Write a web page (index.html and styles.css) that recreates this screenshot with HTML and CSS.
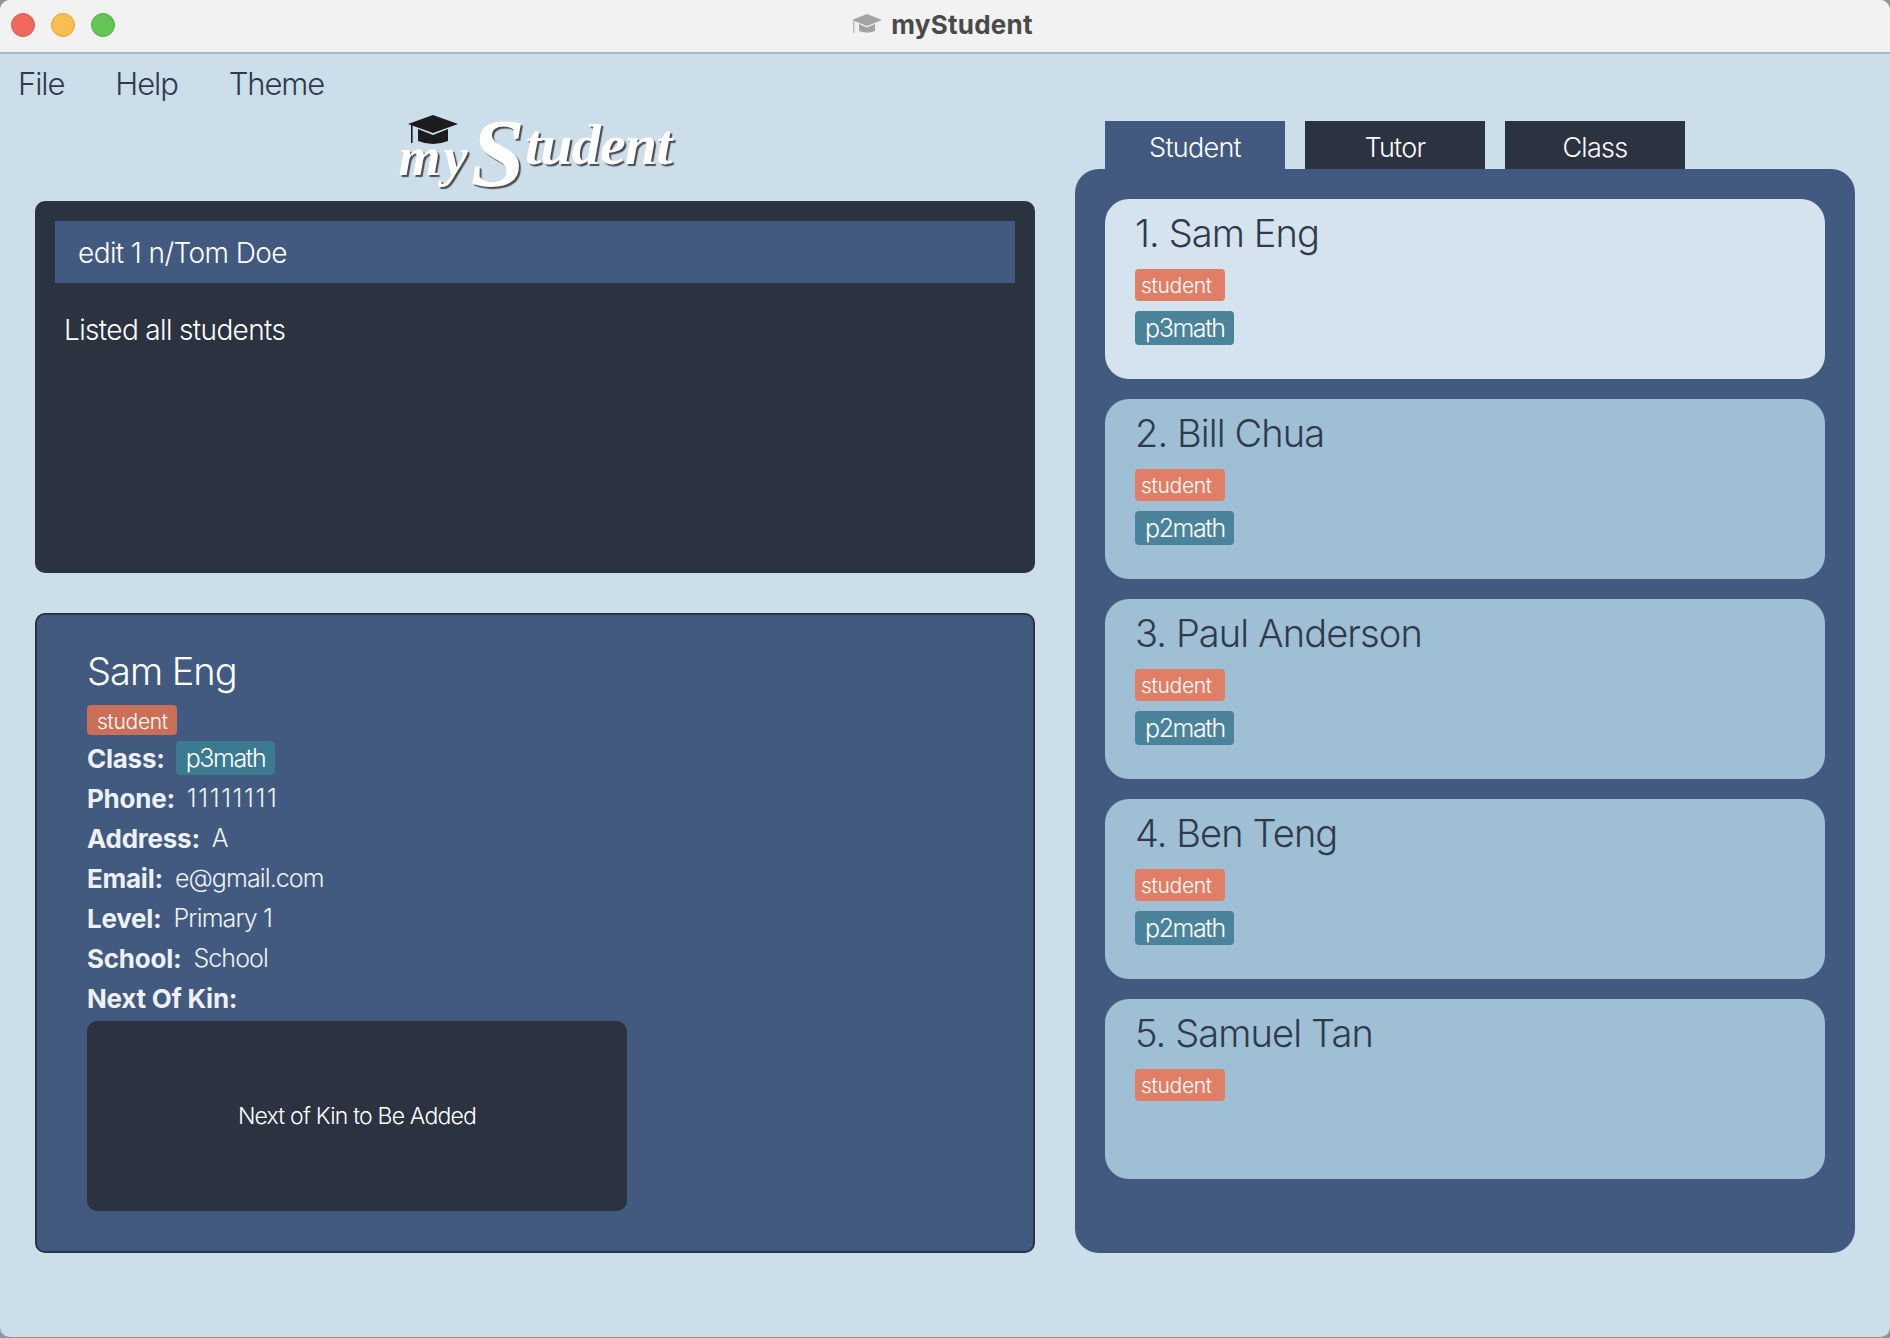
FILE: index.html
```html
<!DOCTYPE html>
<html>
<head>
<meta charset="UTF-8">
<title>myStudent</title>
<link rel="stylesheet" href="styles.css">
</head>
<body>
<div class="window">
    <header class="titlebar">
        <div class="dots">
            <span class="dot red"></span>
            <span class="dot yellow"></span>
            <span class="dot green"></span>
        </div>
        <div class="app-title">
            <svg class="title-icon" viewBox="0 0 30 20" width="30" height="20">
                <path d="M15 0 L30 6 L15 12 L0 6 Z" fill="#a3a3a3"/>
                <path d="M7 10 L15 13.5 L23 10 L23 17 Q15 20 7 17 Z" fill="#a3a3a3"/>
                <rect x="1" y="7" width="1.5" height="12" fill="#bdbdbd"/>
            </svg>
            <span>myStudent</span>
        </div>
    </header>

    <nav class="menubar">
        <a>File</a>
        <a>Help</a>
        <a>Theme</a>
    </nav>

    <main class="content">
        <section class="left">
            <div class="logo">
                <svg class="logo-hat" viewBox="0 0 50 30" width="50" height="30">
                    <path d="M25 0 L50 9 L25 18 L0 9 Z" fill="#1c1c1e"/>
                    <path d="M10 14 L25 20 L40 14 L40 26 Q25 32 10 26 Z" fill="#1c1c1e"/>
                    <rect x="3" y="10" width="1.6" height="18" fill="#1c1c1e"/>
                </svg>
                <span class="logo-my">my</span><span class="logo-cap">S</span><span class="logo-rest">tudent</span>
            </div>

            <div class="command-box">
                <div class="command-input">edit 1 n/Tom Doe</div>
                <div class="result">Listed all students</div>
            </div>

            <div class="detail">
                <h1>Sam Eng</h1>
                <span class="tag tag-role">student</span>
                <div class="row row-class"><b>Class:</b><span class="tag tag-class">p3math</span></div>
                <div class="row"><b>Phone:</b><span class="digits">11111111</span></div>
                <div class="row"><b>Address:</b><span>A</span></div>
                <div class="row"><b>Email:</b><span>e@gmail.com</span></div>
                <div class="row"><b>Level:</b><span>Primary 1</span></div>
                <div class="row"><b>School:</b><span>School</span></div>
                <div class="row"><b>Next Of Kin:</b></div>
                <div class="kin">Next of Kin to Be Added</div>
            </div>
        </section>

        <section class="right">
            <div class="tabs">
                <div class="tab active">Student</div>
                <div class="tab">Tutor</div>
                <div class="tab">Class</div>
            </div>
            <div class="panel">
                <div class="card selected">
                    <h2>1. Sam Eng</h2>
                    <span class="tag role">student</span>
                    <span class="tag cls">p3math</span>
                </div>
                <div class="card">
                    <h2>2. Bill Chua</h2>
                    <span class="tag role">student</span>
                    <span class="tag cls">p2math</span>
                </div>
                <div class="card">
                    <h2>3. Paul Anderson</h2>
                    <span class="tag role">student</span>
                    <span class="tag cls">p2math</span>
                </div>
                <div class="card">
                    <h2>4. Ben Teng</h2>
                    <span class="tag role">student</span>
                    <span class="tag cls">p2math</span>
                </div>
                <div class="card">
                    <h2>5. Samuel Tan</h2>
                    <span class="tag role">student</span>
                </div>
            </div>
        </section>
    </main>
</div>
</body>
</html>
```

FILE: styles.css
```css
* {
    margin: 0;
    padding: 0;
    box-sizing: border-box;
}

body {
    font-family: "Inter", "Liberation Sans", sans-serif;
    background: #8f9599;
    height: 1338px;
    overflow: hidden;
}

.window {
    height: 1338px;
    background: #cbdeea;
    border-radius: 10px;
    overflow: hidden;
    border-bottom: 1px solid #8f9599;
}

.titlebar {
    height: 54px;
    background: #f2f2f2;
    border-bottom: 2px solid #a9bac6;
    display: flex;
    align-items: center;
    justify-content: center;
    position: relative;
}

.dots {
    position: absolute;
    left: 11px;
    top: 13px;
    display: flex;
    gap: 16px;
}

.dot {
    width: 24px;
    height: 24px;
    border-radius: 50%;
}

.red { background: #f2675e; border: 1px solid #dd5a52; }
.yellow { background: #fabd50; border: 1px solid #e0a440; }
.green { background: #62c554; border: 1px solid #54ad48; }

.app-title {
    display: flex;
    align-items: center;
    gap: 9px;
    font-size: 26px;
    font-weight: 700;
    letter-spacing: 0.25px;
    color: #4a4a4a;
    margin: 0 5px 4px 0;
}

.menubar {
    height: 58px;
    padding-left: 18px;
    display: flex;
    align-items: center;
    gap: 51px;
    font-size: 31px;
    font-weight: 300;
    letter-spacing: -1.1px;
    color: #2f3a4c;
}

.content {
    display: flex;
    gap: 40px;
    padding: 2px 35px 0;
}

.left {
    width: 1000px;
}

.logo {
    height: 87px;
    position: relative;
    display: flex;
    justify-content: center;
    align-items: baseline;
    font-family: "Liberation Serif", serif;
    font-style: italic;
    font-weight: 700;
    color: #fff;
    text-shadow: 2px 2px 1px #4d4d4d;
}

.logo-hat {
    position: absolute;
    left: 373px;
    top: 1px;
}

.logo-my {
    font-size: 54px;
    line-height: 60px;
    letter-spacing: 3px;
    transform: translateY(8px);
}

.logo-cap {
    font-size: 98px;
    line-height: 40px;
    transform: translateY(19px);
}

.logo-rest {
    font-size: 58px;
    line-height: 60px;
    letter-spacing: -0.8px;
    transform: translateY(-3px);
}

.command-box {
    height: 372px;
    background: #2b3240;
    border-radius: 10px;
    padding: 20px;
    color: #fff;
}

.command-input {
    height: 62px;
    line-height: 64px;
    background: #425a7f;
    padding-left: 23px;
    font-size: 28px;
    font-weight: 300;
    letter-spacing: -0.6px;
}

.result {
    padding: 30px 0 0 9px;
    font-size: 28px;
    font-weight: 300;
    letter-spacing: -0.65px;
}

.detail {
    height: 640px;
    margin-top: 40px;
    background: #425a7f;
    border: 2px solid #2b3240;
    border-radius: 10px;
    padding: 30px 50px;
    color: #fff;
}

.detail h1 {
    font-size: 38px;
    font-weight: 300;
    letter-spacing: -1px;
    line-height: 52px;
    margin-bottom: 8px;
}

.tag {
    display: inline-block;
    border-radius: 4px;
    color: #fff;
    font-weight: 300;
}

.tag-role {
    background: #cc6f58;
    font-size: 21px;
    letter-spacing: -0.3px;
    height: 30px;
    line-height: 33px;
    padding: 0 10px;
    display: block;
    width: 90px;
}

.row {
    height: 40px;
    display: flex;
    align-items: center;
    gap: 12px;
    font-size: 25px;
    font-weight: 300;
    letter-spacing: -0.9px;
    color: #edf1f6;
}

.row b {
    font-size: 26px;
    font-weight: 700;
    letter-spacing: -0.25px;
}

.digits {
    letter-spacing: 1.6px;
}

.row-class {
    margin-top: 6px;
    height: 34px;
    margin-bottom: 3px;
    gap: 11px;
}

.tag-class {
    background: #3b7a91;
    height: 34px;
    line-height: 35px;
    width: 99px;
    padding: 0 10px;
    font-size: 25px;
    letter-spacing: -1.4px;
}

.kin {
    width: 540px;
    height: 190px;
    margin-top: 3px;
    background: #2b3240;
    border-radius: 10px;
    display: flex;
    align-items: center;
    justify-content: center;
    font-size: 23px;
    font-weight: 300;
    letter-spacing: -0.8px;
    color: #fff;
}

.right {
    width: 780px;
    margin-top: 7px;
}

.tabs {
    display: flex;
    gap: 20px;
    padding-left: 30px;
    height: 48px;
}

.tab {
    width: 180px;
    background: #2b3240;
    color: #fff;
    font-size: 27px;
    font-weight: 300;
    letter-spacing: -0.7px;
    text-align: center;
    line-height: 54px;
}

.tab.active {
    background: #425a7f;
}

.panel {
    height: 1084px;
    background: #425a7f;
    border-radius: 24px;
    padding: 30px;
    display: flex;
    flex-direction: column;
    gap: 20px;
}

.card {
    height: 180px;
    background: #9fbfd5;
    border-radius: 24px;
    padding: 9px 30px;
    display: flex;
    flex-direction: column;
    align-items: flex-start;
}

.card.selected {
    background: #d4e3ed;
}

.card h2 {
    font-size: 38px;
    font-weight: 300;
    letter-spacing: -0.9px;
    line-height: 50px;
    color: #2f3a4c;
    margin-bottom: 11px;
}

.tag.role {
    background: #e07f66;
    font-size: 21px;
    letter-spacing: -0.3px;
    height: 32px;
    line-height: 34px;
    width: 90px;
    padding-left: 6px;
}

.tag.cls {
    background: #4a839a;
    font-size: 25px;
    letter-spacing: -1.4px;
    height: 34px;
    line-height: 35px;
    width: 99px;
    padding-left: 10px;
    margin-top: 10px;
}
```
